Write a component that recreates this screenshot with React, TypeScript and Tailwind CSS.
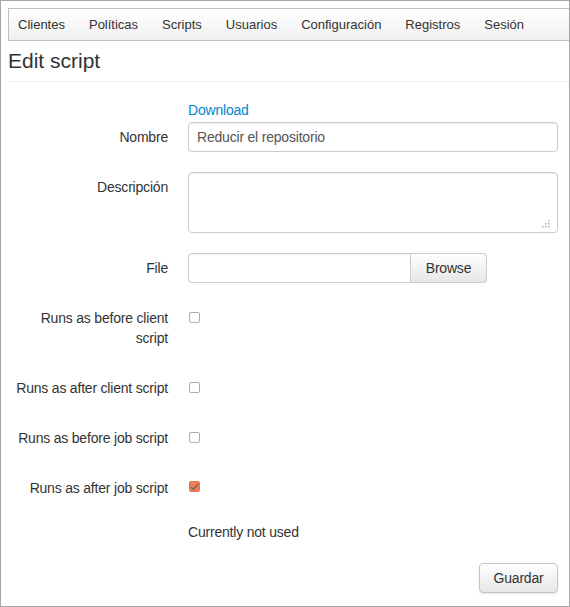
const navItems = ["Clientes", "Políticas", "Scripts", "Usuarios", "Configuración", "Registros", "Sesión"];

function Label({ children }: { children: React.ReactNode }) {
  return (
    <div className="w-[160px] shrink-0 py-[5px] text-right text-[14px] leading-[20px] tracking-[-0.2px] text-[#333]">
      {children}
    </div>
  );
}

function Checkbox({ checked = false }: { checked?: boolean }) {
  if (checked) {
    return (
      <span className="mt-[8px] ml-[1px] flex h-[11px] w-[11px] items-center justify-center rounded-[2px] border border-[#dc7451] bg-[#ee8059]">
        <svg width="9" height="8" viewBox="0 0 9 8">
          <path d="M1 4 L3.5 6.5 L8 1" fill="none" stroke="#7c665e" strokeWidth="1.6" />
        </svg>
      </span>
    );
  }
  return <span className="mt-[9px] ml-[1px] block h-[11px] w-[11px] rounded-[2px] border border-[#adadad] bg-white" />;
}

function CheckRow({ label, checked }: { label: React.ReactNode; checked?: boolean }) {
  return (
    <div className="mb-[20px] flex min-h-[30px] items-start gap-[20px]">
      <Label>{label}</Label>
      <Checkbox checked={checked} />
    </div>
  );
}

export default function App() {
  return (
    <div className="h-[607px] w-[570px] overflow-hidden border border-[#a6a6a6] bg-white font-['Liberation_Sans',Arial,sans-serif] text-[#333]">
      <div className="pt-[7px] pl-[7px]">
        <nav className="flex h-[33px] items-center border border-r-0 border-[#b8c0cc] bg-gradient-to-b from-white to-[#f0f0f0]">
          {navItems.map((item, i) => (
            <span
              key={item}
              className={`${i === 0 ? "pl-[9px]" : "pl-[12px]"} pr-[12px] text-[13px] leading-[20px] text-[#333]`}
            >
              {item}
            </span>
          ))}
        </nav>

        <div className="mt-[8px] border-b border-[#eeeeee] pb-[8px]">
          <h1 className="text-[21px] leading-[24px] font-normal text-[#333]">Edit script</h1>
        </div>

        <form className="mt-[18px] pr-[11px]">
          <div className="flex gap-[20px]">
            <div className="w-[160px] shrink-0" />
            <a className="text-[14px] leading-[20px] tracking-[-0.2px] text-[#0088cc]">Download</a>
          </div>

          <div className="mt-[2px] mb-[20px] flex items-center gap-[20px]">
            <Label>Nombre</Label>
            <div className="flex h-[30px] flex-1 items-center rounded-[4px] border border-[#cccccc] px-[8px] text-[14px] tracking-[-0.2px] text-[#555] shadow-[inset_0_1px_1px_rgba(0,0,0,0.075)]">
              Reducir el repositorio
            </div>
          </div>

          <div className="mb-[20px] flex items-start gap-[20px]">
            <Label>Descripción</Label>
            <div className="relative h-[61px] flex-1 rounded-[4px] border border-[#cccccc] shadow-[inset_0_1px_1px_rgba(0,0,0,0.075)]">
              <svg className="absolute right-[7px] bottom-[4px]" width="8" height="8" viewBox="0 0 8 8">
                <rect x="6" y="0" width="1.5" height="1.5" fill="#b0b0b0" />
                <rect x="6" y="3" width="1.5" height="1.5" fill="#b0b0b0" />
                <rect x="3" y="3" width="1.5" height="1.5" fill="#b0b0b0" />
                <rect x="6" y="6" width="1.5" height="1.5" fill="#b0b0b0" />
                <rect x="3" y="6" width="1.5" height="1.5" fill="#b0b0b0" />
                <rect x="0" y="6" width="1.5" height="1.5" fill="#b0b0b0" />
              </svg>
            </div>
          </div>

          <div className="mb-[20px] flex items-center gap-[20px]">
            <Label>File</Label>
            <div className="flex h-[30px]">
              <div className="w-[223px] rounded-l-[4px] border border-[#cccccc] shadow-[inset_0_1px_1px_rgba(0,0,0,0.075)]" />
              <div className="flex w-[76px] items-center justify-center rounded-r-[4px] border border-l-0 border-[#cccccc] bg-gradient-to-b from-white to-[#e6e6e6] text-[14px] tracking-[-0.2px] text-[#333]">
                Browse
              </div>
            </div>
          </div>

          <CheckRow
            label={
              <>
                Runs as before client
                <br />
                script
              </>
            }
          />
          <CheckRow label="Runs as after client script" />
          <CheckRow label="Runs as before job script" />
          <CheckRow label="Runs as after job script" checked />

          <div className="-mt-[1px] flex gap-[20px]">
            <div className="w-[160px] shrink-0" />
            <div className="text-[14px] leading-[20px] tracking-[-0.2px] text-[#333]">Currently not used</div>
          </div>

          <div className="mt-[21px] flex justify-end">
            <button
              type="button"
              className="h-[30px] w-[79px] rounded-[4px] border border-[#c5c5c5] bg-gradient-to-b from-white to-[#e6e6e6] text-[14px] tracking-[-0.2px] text-[#333] shadow-[0_1px_2px_rgba(0,0,0,0.1)]"
            >
              Guardar
            </button>
          </div>
        </form>
      </div>
    </div>
  );
}
